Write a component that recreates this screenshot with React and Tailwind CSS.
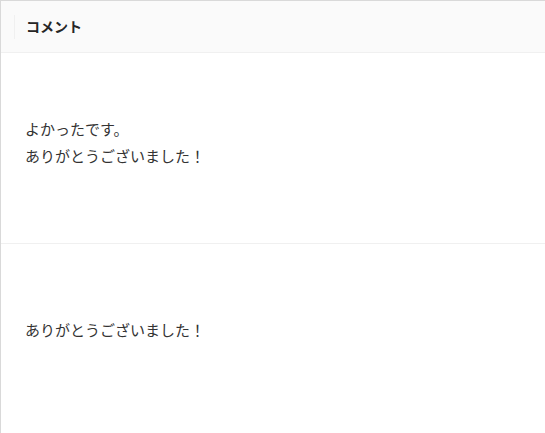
function App() {
  return (
    <div className="w-[545px] h-[433px] overflow-hidden bg-white border-t border-l border-[#d9d9d9] font-['Noto_Sans_CJK_JP',sans-serif]">
      <div className="h-[52px] bg-[#fafafa] border-b border-[#f0f0f0] flex items-center">
        <div className="ml-[13px] w-px h-[24px] bg-[#f0f0f0]" />
        <div className="ml-[11px] text-[14px] font-bold text-[#262626]">コメント</div>
      </div>
      <div className="h-[191px] border-b border-[#f0f0f0] pl-[24px] pt-[62px] text-[15px] leading-[27px] text-[#333]">
        <div>よかったです。</div>
        <div>ありがとうございました！</div>
      </div>
      <div className="pl-[24px] pt-[72px] text-[15px] leading-[27px] text-[#333]">
        <div>ありがとうございました！</div>
      </div>
    </div>
  );
}

export default App;
